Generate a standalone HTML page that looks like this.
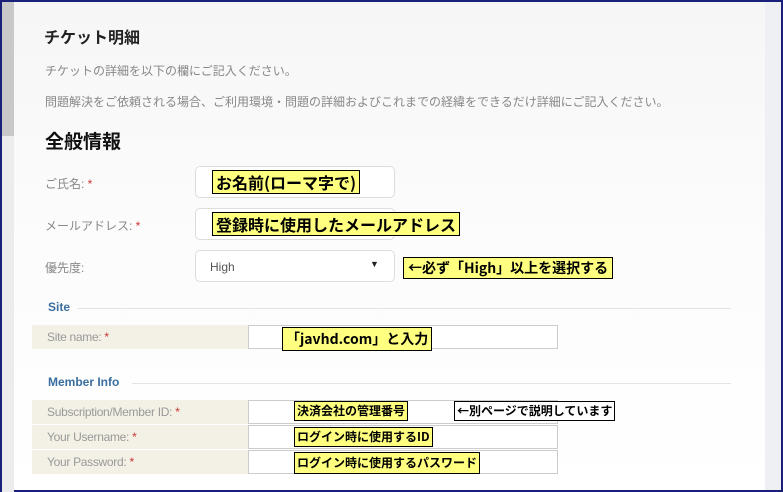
<!DOCTYPE html>
<html><head><meta charset="utf-8"><style>
*{margin:0;padding:0;box-sizing:border-box}
html,body{width:783px;height:492px;overflow:hidden}
body{background:#1a1f7a;font-family:"Liberation Sans","Noto Sans CJK JP",sans-serif;position:relative}
#pg{position:absolute;left:2px;top:2px;width:779px;height:488px;background:linear-gradient(#f6f6f6,#fbfbfb 40%,#fff);}
.a{position:absolute;white-space:nowrap}
.g{color:#888;font-size:12px}
.inp{position:absolute;background:#fff;border:1px solid #ddd;border-radius:5px}
.y{position:absolute;background:#ffff80;border:1px solid #000;color:#000;font-weight:bold;white-space:nowrap;font-family:"Noto Sans CJK JP",sans-serif}
.lb{position:absolute;left:30px;width:216px;height:24px;background:#f3f1e6;color:#999;font-size:12px;line-height:24px;padding-left:15px;letter-spacing:-0.3px}
.lb b{color:#c33;font-weight:normal}
.fi{position:absolute;left:246px;width:310px;height:24px;background:#fff;border:1px solid #ccc}
.h{position:absolute;left:46px;color:#3a6f9f;font-size:12px;font-weight:bold}
.ln{position:absolute;height:1px;background:#e4e4e4;right:50px}
</style></head><body><div id="pg">
<div class="a" style="left:0;top:0;width:12px;height:134px;background:#c8c8c8"></div>
<div class="a" style="left:0;top:134px;width:12px;height:360px;background:#ececec"></div>
<div class="a" style="left:763px;top:0;width:16px;height:488px;background:#eef0f3"></div>
<div class="a" style="left:42px;top:22px;font-size:16px;font-weight:bold;color:#222">チケット明細</div>
<div class="a g" style="left:43px;top:60px">チケットの詳細を以下の欄にご記入ください。</div>
<div class="a g" style="left:43px;top:91px">問題解決をご依頼される場合、ご利用環境・問題の詳細およびこれまでの経緯をできるだけ詳細にご記入ください。</div>
<div class="a" style="left:43px;top:125px;font-size:19px;font-weight:bold;color:#111">全般情報</div>
<div class="a g" style="left:43px;top:173px">ご氏名: <span style="color:#c33">*</span></div>
<div class="a g" style="left:43px;top:215px">メールアドレス: <span style="color:#c33">*</span></div>
<div class="a g" style="left:43px;top:257px">優先度:</div>
<div class="inp" style="left:193px;top:164px;width:200px;height:32px"></div>
<div class="inp" style="left:193px;top:206px;width:200px;height:32px"></div>
<div class="inp" style="left:193px;top:248px;width:200px;height:32px"></div>
<div class="a" style="left:208px;top:258px;font-size:12px;color:#555">High</div>
<div class="a" style="left:368px;top:257px;font-size:9px;color:#222">▼</div>
<div class="y" style="left:210px;top:168px;height:24px;padding:0 3px;font-size:16px;line-height:22px">お名前(ローマ字で)</div>
<div class="y" style="left:210px;top:210px;height:24px;padding:0 3px;font-size:16px;line-height:22px">登録時に使用したメールアドレス</div>
<div class="y" style="left:401px;top:255px;height:22px;padding:0 4px;font-size:14px;line-height:20px">←必ず「High」以上を選択する</div>
<div class="h" style="top:298px">Site</div>
<div class="ln" style="left:76px;top:306px"></div>
<div class="lb" style="top:323px">Site name: <b>*</b></div>
<div class="fi" style="top:323px"></div>
<div class="y" style="left:280px;top:325px;height:24px;padding:0 3px;font-size:14px;line-height:22px">「javhd.com」と入力</div>
<div class="h" style="top:373px">Member Info</div>
<div class="ln" style="left:130px;top:381px"></div>
<div class="lb" style="top:398px">Subscription/Member ID: <b>*</b></div>
<div class="lb" style="top:423px">Your Username: <b>*</b></div>
<div class="lb" style="top:448px">Your Password: <b>*</b></div>
<div class="fi" style="top:398px"></div>
<div class="fi" style="top:423px"></div>
<div class="fi" style="top:448px"></div>
<div class="y" style="left:292px;top:399px;height:20px;padding:0 2px;font-size:12px;line-height:18px">決済会社の管理番号</div>
<div class="y" style="left:452px;top:399px;height:20px;padding:0 2px;font-size:12px;line-height:18px;background:#fff">←別ページで説明しています</div>
<div class="y" style="left:292px;top:425px;height:20px;padding:0 2px;font-size:12px;line-height:18px">ログイン時に使用するID</div>
<div class="y" style="left:292px;top:450px;height:22px;padding:0 2px;font-size:12px;line-height:20px">ログイン時に使用するパスワード</div>
</div>
</body></html>
